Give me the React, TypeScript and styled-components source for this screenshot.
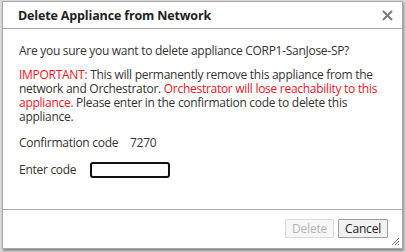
import React from "react";
import styled, { createGlobalStyle } from "styled-components";

const Global = createGlobalStyle`
  html, body { margin: 0; padding: 0; }
  body {
    width: 406px; height: 252px; overflow: hidden;
    background: #d9d9d9;
    font-family: "Open Sans", "Noto Sans", sans-serif;
  }
`;

const Stage = styled.div`
  padding: 1px 0 0 2px;
  height: 252px;
  box-sizing: border-box;
`;

const Dialog = styled.div`
  width: 401px;
  height: 248px;
  box-sizing: border-box;
  background: #fff;
  border: 1px solid #a8a8a8;
  box-shadow: 1px 2px 2px rgba(0, 0, 0, 0.35);
  display: flex;
  flex-direction: column;
  position: relative;
`;

const Header = styled.div`
  height: 26px;
  flex: none;
  display: flex;
  align-items: center;
  justify-content: space-between;
  padding: 0 9px 0 15px;
  border-bottom: 1px solid #a9a9a9;
`;

const Title = styled.div`
  font-weight: 700;
  font-size: 12.5px;
  color: #222;
  letter-spacing: -0.15px;
`;

const Close = styled.button`
  border: 0;
  background: none;
  padding: 0;
  width: 12px;
  height: 12px;
  display: flex;
  align-items: center;
  justify-content: center;
  cursor: pointer;
`;

const Body = styled.div`
  flex: 1;
  padding: 15px 16px 0 16px;
  font-size: 12px;
  line-height: 14px;
  color: #333;
  letter-spacing: -0.28px;
`;

const Para = styled.p`
  margin: 0 0 10px 0;
`;

const Red = styled.span`
  color: #f0141e;
`;

const FieldRow = styled.div<{ $mt: number }>`
  display: flex;
  align-items: center;
  margin-top: ${(p) => p.$mt}px;
`;

const Label = styled.span<{ $w: number }>`
  width: ${(p) => p.$w}px;
`;

const CodeInput = styled.input`
  width: 80px;
  height: 16px;
  box-sizing: border-box;
  border: 2px solid #111;
  border-radius: 3px;
  padding: 0 3px;
  font: inherit;
  outline: none;
`;

const Footer = styled.div`
  height: 39px;
  flex: none;
  border-top: 1px solid #a9a9a9;
  display: flex;
  justify-content: flex-end;
  align-items: flex-start;
  gap: 4px;
  padding: 9px 14px 0 0;
  box-sizing: border-box;
`;

const Btn = styled.button<{ $disabled?: boolean }>`
  height: 19px;
  padding: 0 6px;
  font-family: inherit;
  font-size: 12px;
  letter-spacing: -0.2px;
  background: ${(p) => (p.$disabled ? "#f7f7f7" : "#f2f2f2")};
  color: ${(p) => (p.$disabled ? "#b5b5b5" : "#222")};
  border: 1px solid ${(p) => (p.$disabled ? "#dcdcdc" : "#9d9d9d")};
  border-radius: 1px;
  line-height: 17px;
`;

const Grip = styled.svg`
  position: absolute;
  right: 2px;
  bottom: 2px;
`;

export default function App() {
  return (
    <>
      <Global />
      <Stage>
        <Dialog>
          <Header>
            <Title>Delete Appliance from Network</Title>
            <Close aria-label="close">
              <svg width="11" height="11" viewBox="0 0 11 11">
                <path d="M1 1 L10 10 M10 1 L1 10" stroke="#7a7a7a" strokeWidth="2" />
              </svg>
            </Close>
          </Header>
          <Body>
            <Para>Are you sure you want to delete appliance CORP1-SanJose-SP?</Para>
            <Para>
              <Red>IMPORTANT:</Red> This will permanently remove this appliance from the
              network and Orchestrator.{" "}
              <Red>Orchestrator will lose reachability to this appliance.</Red> Please enter in
              the confirmation code to delete this appliance.
            </Para>
            <FieldRow $mt={12}>
              <Label $w={111}>Confirmation code</Label>
              <span>7270</span>
            </FieldRow>
            <FieldRow $mt={12}>
              <Label $w={71}>Enter code</Label>
              <CodeInput />
            </FieldRow>
          </Body>
          <Footer>
            <Btn $disabled>Delete</Btn>
            <Btn>Cancel</Btn>
          </Footer>
          <Grip width="9" height="9" viewBox="0 0 9 9">
            <path d="M8 1 L1 8 M8 4 L4 8 M8 7 L7 8" stroke="#777" strokeWidth="1" />
          </Grip>
        </Dialog>
      </Stage>
    </>
  );
}
